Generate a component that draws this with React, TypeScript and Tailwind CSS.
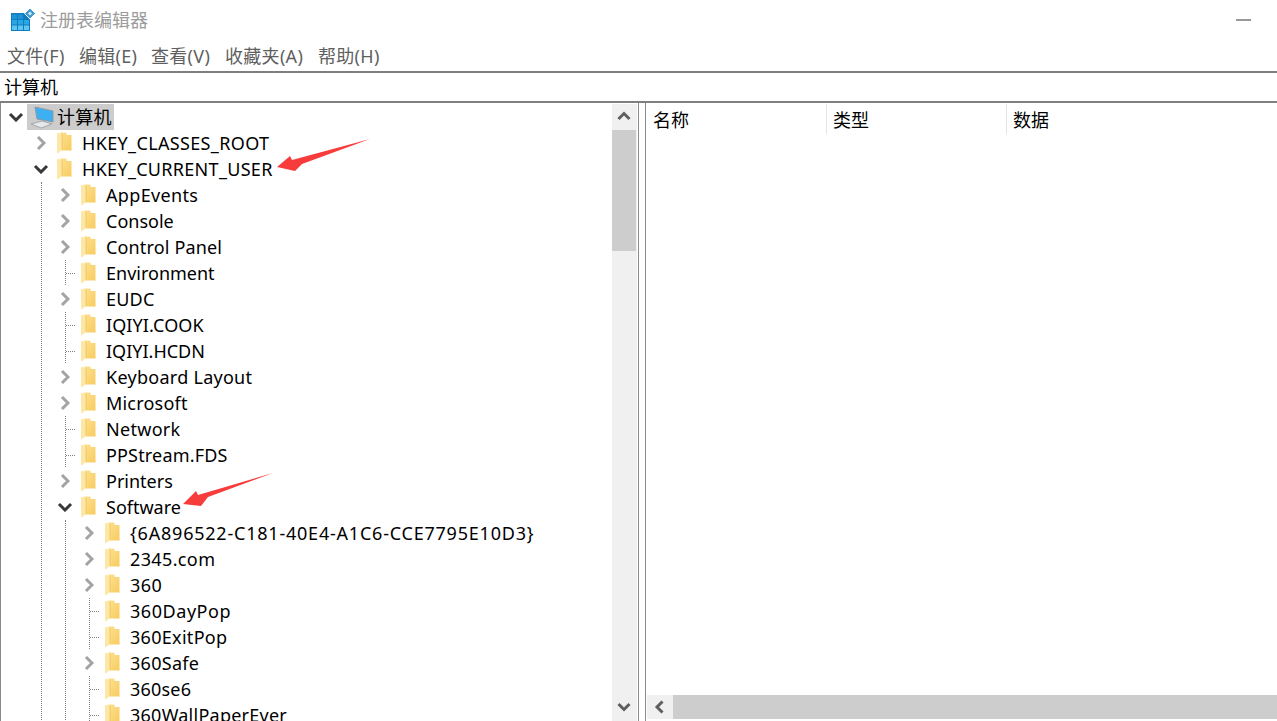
import type { ReactNode } from 'react';

const textFont = "font-['Noto_Sans','Noto_Sans_CJK_SC',sans-serif]";

function FolderIcon() {
  return (
    <svg width="16" height="22" viewBox="0 0 16 22" className="shrink-0">
      <defs>
        <linearGradient id="folderBack" x1="0" y1="0" x2="1" y2="1">
          <stop offset="0" stopColor="#fce293" />
          <stop offset="1" stopColor="#f8cb5e" />
        </linearGradient>
      </defs>
      <path d="M3 0.5 H9 L10 3 H14.5 V18.5 H3 Z" fill="url(#folderBack)" />
      <path d="M0 1 L5 1.5 V17.5 L1 21.5 L0 20.5 Z" fill="#fde7a6" />
      <path d="M5 1.5 V17.5" stroke="#f3c760" strokeWidth="1" />
    </svg>
  );
}

function Chevron({ open }: { open: boolean }) {
  return open ? (
    <svg width="16" height="10" viewBox="0 0 16 10">
      <path d="M2 2 L8 8 L14 2" fill="none" stroke="#383838" strokeWidth="3" />
    </svg>
  ) : (
    <svg width="10" height="16" viewBox="0 0 10 16">
      <path d="M2 2 L8 8 L2 14" fill="none" stroke="#a3a3a3" strokeWidth="3" />
    </svg>
  );
}

function LeafStub() {
  return (
    <svg width="22" height="26" viewBox="0 0 22 26" className="absolute left-0 top-0">
      <path d="M11.5 0 V26 M12 13.5 H22" fill="none" stroke="#808080" strokeDasharray="1 1" />
    </svg>
  );
}

function Row({ label, kind, track = 'tracking-normal' }: { label: string; kind: 'closed' | 'open' | 'leaf'; track?: string }) {
  return (
    <div className="flex h-[26px] items-center">
      <div className="relative flex h-[26px] w-[22px] shrink-0 items-center justify-center">
        {kind === 'leaf' ? <LeafStub /> : <Chevron open={kind === 'open'} />}
      </div>
      <div className="ml-[5px] flex w-[25px] shrink-0">
        <FolderIcon />
      </div>
      <span className={`whitespace-nowrap text-[18px] leading-[26px] text-black ${track}`}>{label}</span>
    </div>
  );
}

function Branch({ children }: { children: ReactNode }) {
  return <div className="ml-[11px] border-l border-dotted border-[#808080] pl-[12px]">{children}</div>;
}

function ScrollButton({ dir }: { dir: 'up' | 'down' | 'left' }) {
  const paths = { up: 'M2.5 10 L8 4.5 L13.5 10', down: 'M2.5 5 L8 10.5 L13.5 5', left: 'M10.5 2.5 L5 8 L10.5 13.5' };
  return (
    <svg width="16" height="16" viewBox="0 0 16 16">
      <path d={paths[dir]} fill="none" stroke="#5f5f5f" strokeWidth="3" />
    </svg>
  );
}

const depth2Before = [
  { label: 'AppEvents', kind: 'closed', track: 'tracking-[0.33px]' },
  { label: 'Console', kind: 'closed', track: 'tracking-normal' },
  { label: 'Control Panel', kind: 'closed', track: 'tracking-[0.15px]' },
  { label: 'Environment', kind: 'leaf', track: 'tracking-normal' },
  { label: 'EUDC', kind: 'closed', track: 'tracking-[0.2px]' },
  { label: 'IQIYI.COOK', kind: 'leaf', track: 'tracking-[0.1px]' },
  { label: 'IQIYI.HCDN', kind: 'leaf', track: 'tracking-normal' },
  { label: 'Keyboard Layout', kind: 'closed', track: 'tracking-[0.27px]' },
  { label: 'Microsoft', kind: 'closed', track: 'tracking-[0.2px]' },
  { label: 'Network', kind: 'leaf', track: 'tracking-[0.3px]' },
  { label: 'PPStream.FDS', kind: 'leaf', track: 'tracking-[0.17px]' },
  { label: 'Printers', kind: 'closed', track: 'tracking-normal' },
] as const;

const softwareKeys = [
  { label: '{6A896522-C181-40E4-A1C6-CCE7795E10D3}', kind: 'closed', track: 'tracking-[0.78px]' },
  { label: '2345.com', kind: 'closed', track: 'tracking-[0.37px]' },
  { label: '360', kind: 'closed', track: 'tracking-[0.4px]' },
  { label: '360DayPop', kind: 'leaf', track: 'tracking-[0.55px]' },
  { label: '360ExitPop', kind: 'leaf', track: 'tracking-[0.3px]' },
  { label: '360Safe', kind: 'closed', track: 'tracking-[0.3px]' },
  { label: '360se6', kind: 'leaf', track: 'tracking-[0.2px]' },
  { label: '360WallPaperEver', kind: 'leaf', track: 'tracking-[0.25px]' },
] as const;

export default function App() {
  return (
    <div className={`relative flex h-[721px] w-[1277px] flex-col overflow-hidden bg-white ${textFont}`}>
      {/* Title bar */}
      <div className="flex h-[40px] shrink-0 items-center pl-[11px] pr-[26px]">
        <svg width="24" height="24" viewBox="0 0 24 24" className="shrink-0">
          <rect x="0" y="5" width="19" height="18" fill="#0e7cc0" />
          <path d="M1 6.5 H6 V11 H1 Z M7 6.5 H12 V11 H7 Z" fill="#1f93d8" />
          <path d="M1 12 H6 V16.5 H1 Z M7 12 H12 V16.5 H7 Z M13 12 H18 V16.5 H13 Z" fill="#2ba6e2" />
          <path d="M1 17.5 H6 V22 H1 Z M7 17.5 H12 V22 H7 Z M13 17.5 H18 V22 H13 Z" fill="#5cc6f0" />
          <path d="M19 0 L24.5 5.5 L19 11 L13.5 5.5 Z" fill="#3f9bd2" stroke="#ffffff" strokeWidth="1" />
          <path d="M19 3.5 L21 5.5 L19 7.5 L17 5.5 Z" fill="#cfe8f6" />
        </svg>
        <span className="ml-[5px] text-[18px] text-[#9c9c9c]">注册表编辑器</span>
        <div className="ml-auto h-[2px] w-[15px] bg-[#999999]" />
      </div>

      {/* Menu */}
      <div className="flex h-[31px] shrink-0 items-center pl-[7px] pt-[2px] text-[18px] tracking-[0.3px] text-[#5f5f5f]">
        <span className="w-[72px]">文件(F)</span>
        <span className="w-[72px]">编辑(E)</span>
        <span className="w-[74px]">查看(V)</span>
        <span className="w-[93px]">收藏夹(A)</span>
        <span>帮助(H)</span>
      </div>

      {/* Address bar */}
      <div className="flex h-[32px] shrink-0 items-center border-y-2 border-[#7f7f7f] pl-[4px] text-[18px] text-black">
        计算机
      </div>

      <div className="flex min-h-0 flex-1">
        {/* Tree pane */}
        <div className="flex w-[639px] shrink-0 border-x border-[#8a8a8a] pt-[1px]">
          <div className="min-w-0 flex-1 overflow-hidden">
            <div className="flex h-[26px] items-center">
              <div className="flex w-[26px] shrink-0 justify-center pl-[4px]">
                <Chevron open />
              </div>
              <div className="flex h-[26px] items-center bg-[#cccccc] pr-[2px]">
                <svg width="30" height="26" viewBox="0 0 30 26" className="shrink-0">
                  <path d="M8 3 L26 7 V18 L10 15 Z" fill="#3db0f2" stroke="#8f9aa3" strokeWidth="1" />
                  <path d="M4 20 L15 17 L25 20 L14 24 Z" fill="#e6e9eb" stroke="#a8a8a8" strokeWidth="1" />
                </svg>
                <span className="text-[18px] leading-[26px] tracking-[0.2px] text-black">计算机</span>
              </div>
            </div>
            <div className="pl-[29px]">
              <Row label="HKEY_CLASSES_ROOT" kind="closed" track="tracking-[0.35px]" />
              <Row label="HKEY_CURRENT_USER" kind="open" track="tracking-[0.3px]" />
              <Branch>
                {depth2Before.map((k) => (
                  <Row key={k.label} label={k.label} kind={k.kind} track={k.track} />
                ))}
                <Row label="Software" kind="open" />
                <Branch>
                  {softwareKeys.map((k) => (
                    <Row key={k.label} label={k.label} kind={k.kind} track={k.track} />
                  ))}
                </Branch>
              </Branch>
            </div>
          </div>
          {/* Vertical scrollbar */}
          <div className="flex w-[25px] shrink-0 flex-col bg-[#f0f0f0] pr-[1px]">
            <div className="flex h-[26px] items-center justify-center">
              <ScrollButton dir="up" />
            </div>
            <div className="h-[121px] bg-[#cdcdcd]" />
            <div className="flex-1" />
            <div className="mb-[1px] flex h-[26px] items-center justify-center">
              <ScrollButton dir="down" />
            </div>
          </div>
          <div className="w-[1px] shrink-0" />
        </div>

        {/* Splitter */}
        <div className="w-[6px] shrink-0" />

        {/* List pane */}
        <div className="flex min-w-0 flex-1 flex-col border-l border-[#8a8a8a] pt-[1px]">
          <div className="flex h-[30px] shrink-0 text-[18px] text-black">
            <div className="w-[181px] border-r border-[#e5e5e5] pl-[7px] pt-[1px] leading-[30px]">名称</div>
            <div className="w-[180px] border-r border-[#e5e5e5] pl-[6px] pt-[1px] leading-[30px]">类型</div>
            <div className="pl-[6px] pt-[1px] leading-[30px]">数据</div>
          </div>
          <div className="flex-1" />
          <div className="mb-[2px] ml-[1px] flex h-[24px] shrink-0 bg-[#cdcdcd]">
            <div className="flex w-[26px] items-center justify-center bg-[#f0f0f0]">
              <ScrollButton dir="left" />
            </div>
          </div>
        </div>
      </div>

      {/* Red annotation arrows */}
      <svg width="1277" height="721" viewBox="0 0 1277 721" className="pointer-events-none absolute left-0 top-0">
        <path d="M277 167 L290 156 L292 160 L370 139 L302 164 L295 171 Z" fill="#f83c3c" />
        <path d="M183 504 L196 491 L198 495 L273 473 L208 497 L201 506 Z" fill="#f83c3c" />
      </svg>
    </div>
  );
}
